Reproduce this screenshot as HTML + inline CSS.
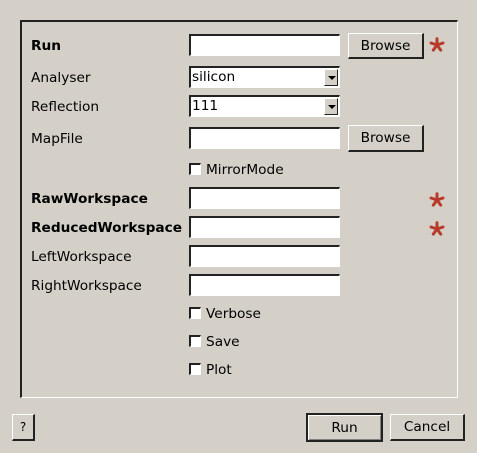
<!DOCTYPE html>
<html><head><style>
body{margin:0;width:477px;height:453px;background:#d4d0c8;font-family:"DejaVu Sans","Liberation Sans",sans-serif;font-size:13.7px;color:#000;position:relative;overflow:hidden}
.a{position:absolute}
.frame{left:20px;top:20px;width:435px;height:375px;border-left:2px solid #222;border-top:2px solid #222;border-right:1px solid #fff;border-bottom:1px solid #fff}
.lbl{left:31px;line-height:16px;margin-top:1px}
.b{font-weight:bold}
.in{left:189px;width:148px;height:19px;background:#fff;border-top:2px solid #222;border-left:2px solid #222;border-right:1px solid #fff;border-bottom:1px solid #fff;box-sizing:content-box}
.cb{left:189px;background:#fff;border-top:2px solid #222;border-left:2px solid #222;border-right:1px solid #fff;border-bottom:1px solid #fff;line-height:19px;padding-left:1px;box-sizing:border-box;height:22px;width:151px}
.arr{position:absolute;right:1px;top:1px;width:14px;height:17px;background:#d4d0c8;border-top:1px solid #fff;border-left:1px solid #fff;border-right:1px solid #222;border-bottom:1px solid #222;box-sizing:border-box}
.arr:after{content:"";position:absolute;left:3px;top:6px;border-left:4px solid transparent;border-right:4px solid transparent;border-top:4px solid #000}
.btn{background:#d4d0c8;border-top:1px solid #fff;border-left:1px solid #fff;border-right:2px solid #222;border-bottom:2px solid #222;box-sizing:border-box;text-align:center}
.chk{left:189px;width:12px;height:12px;background:#fff;border-top:2px solid #222;border-left:2px solid #222;border-right:1px solid #fff;border-bottom:1px solid #fff;box-sizing:border-box}
.ct{left:206px;line-height:16px;margin-top:1px}
</style></head><body>
<div class="a frame"></div>

<div class="a lbl b" style="top:37px">Run</div>
<div class="a in" style="top:34px"></div>
<div class="a btn" style="left:348px;top:33px;width:76px;height:26px;line-height:24px">Browse</div>

<div class="a lbl" style="top:69px">Analyser</div>
<div class="a cb" style="top:66px">silicon<div class="arr"></div></div>

<div class="a lbl" style="top:98px">Reflection</div>
<div class="a cb" style="top:95px">111<div class="arr"></div></div>

<div class="a lbl" style="top:130px">MapFile</div>
<div class="a in" style="top:127px"></div>
<div class="a btn" style="left:348px;top:125px;width:76px;height:27px;line-height:25px">Browse</div>

<div class="a chk" style="top:163px"></div><div class="a ct" style="top:161px">MirrorMode</div>

<div class="a lbl b" style="top:190px">RawWorkspace</div>
<div class="a in" style="top:187px"></div>
<div class="a lbl b" style="top:219px">ReducedWorkspace</div>
<div class="a in" style="top:216px"></div>
<div class="a lbl" style="top:248px">LeftWorkspace</div>
<div class="a in" style="top:245px"></div>
<div class="a lbl" style="top:277px">RightWorkspace</div>
<div class="a in" style="top:274px"></div>

<div class="a chk" style="top:307px"></div><div class="a ct" style="top:305px">Verbose</div>
<div class="a chk" style="top:335px"></div><div class="a ct" style="top:333px">Save</div>
<div class="a chk" style="top:363px"></div><div class="a ct" style="top:361px">Plot</div>

<svg class="a" style="left:429px;top:37px" width="16" height="16" viewBox="-8 -8 16 16"><g stroke="#b83a2a" stroke-width="3" stroke-linecap="round"><line x1="0" y1="0" x2="0" y2="-6.3"/><line x1="0" y1="0" x2="6" y2="-2"/><line x1="0" y1="0" x2="3.7" y2="5.1"/><line x1="0" y1="0" x2="-3.7" y2="5.1"/><line x1="0" y1="0" x2="-6" y2="-2"/></g></svg>
<svg class="a" style="left:429px;top:192px" width="16" height="16" viewBox="-8 -8 16 16"><g stroke="#b83a2a" stroke-width="3" stroke-linecap="round"><line x1="0" y1="0" x2="0" y2="-6.3"/><line x1="0" y1="0" x2="6" y2="-2"/><line x1="0" y1="0" x2="3.7" y2="5.1"/><line x1="0" y1="0" x2="-3.7" y2="5.1"/><line x1="0" y1="0" x2="-6" y2="-2"/></g></svg>
<svg class="a" style="left:429px;top:221px" width="16" height="16" viewBox="-8 -8 16 16"><g stroke="#b83a2a" stroke-width="3" stroke-linecap="round"><line x1="0" y1="0" x2="0" y2="-6.3"/><line x1="0" y1="0" x2="6" y2="-2"/><line x1="0" y1="0" x2="3.7" y2="5.1"/><line x1="0" y1="0" x2="-3.7" y2="5.1"/><line x1="0" y1="0" x2="-6" y2="-2"/></g></svg>

<div class="a btn" style="left:12px;top:414px;width:23px;height:27px;line-height:25px;font-size:12px">?</div>
<div class="a btn" style="left:306px;top:413px;width:77px;height:29px;line-height:27px;border-top:2px solid #222;border-left:2px solid #222;box-shadow:inset 1px 1px #fff, inset -1px -1px #808080">Run</div>
<div class="a btn" style="left:390px;top:414px;width:75px;height:27px;line-height:25px">Cancel</div>
</body></html>
